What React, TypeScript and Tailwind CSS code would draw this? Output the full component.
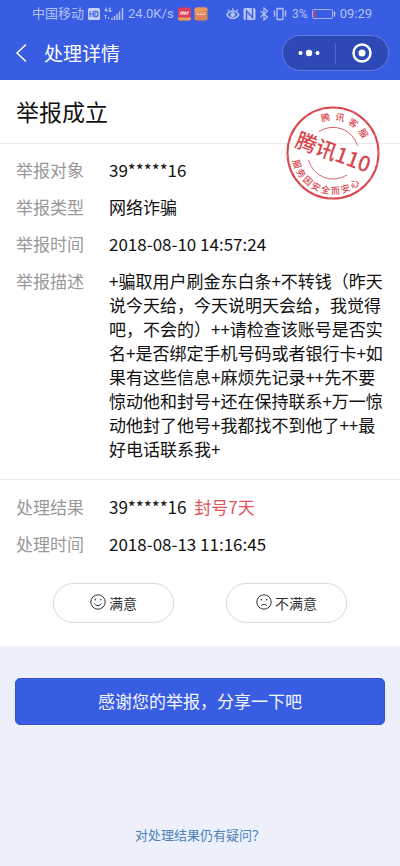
import type { ReactNode } from "react";

const topSeal = ["腾", "讯", "客", "服"];
const bottomSeal = ["服", "务", "因", "安", "全", "而", "安", "心"];

function SignalIcons() {
  return (
    <>
      <svg className="ml-1 h-3 w-3" viewBox="0 0 12 12" aria-hidden="true">
        <rect width="12" height="12" rx="1.5" fill="#c3cff8" />
        <path d="M2 3v6M5.2 3v6M2 6h3.2M7 3.4v5.2h1c1.400 0 2-1 2-2.600s-.6-2.600-2-2.600z" fill="none" stroke="#3a5de0" strokeWidth="1.100" />
      </svg>
      <svg className="ml-1 h-[14px] w-5" viewBox="0 0 20 14" fill="none" stroke="#b4c3f7" aria-hidden="true">
        <path d="M2.500 .5L.8 3.500h2.600M2.700 2v3M7 1.200H5.200v3.300H7V3H6" strokeWidth="1" />
        <path d="M1.500 8v4M.5 9l1-1 1 1M4.500 12v-2" strokeWidth="1" />
        <path d="M8 13v-2M10.500 13V9M13 13V7M15.500 13V4.500M18.500 13V1" strokeWidth="1.500" />
      </svg>
    </>
  );
}

function AppBadges() {
  return (
    <svg className="ml-1 h-[14px] w-[30px]" viewBox="0 0 30 14" aria-hidden="true">
      <rect x="0" y="0.500" width="13" height="13" rx="2" fill="#d8405e" />
      <path d="M0 10.500h13v1a2 2 0 0 1-2 2H2a2 2 0 0 1-2-2z" fill="#e5a25e" />
      <path d="M2 7.500l1.500-3M4.500 7.500l1-3M6.500 7.500l1-3M9 7.500l1.500-3M2.500 5.300h8.500M2 7h8" stroke="#fff" strokeWidth="0.700" />
      <rect x="16.500" y="0.500" width="13" height="13" rx="2" fill="#de8357" />
      <path d="M18.500 .5h9a2 2 0 0 1 2 2v1l-13 2v-3a2 2 0 0 1 2-2z" fill="#e79a5c" />
      <path d="M18.500 7.500h9M18.500 6h2.500M22 6h2M25 6h2.500" stroke="#f5d3bd" strokeWidth="0.900" />
    </svg>
  );
}

function DeviceIcons() {
  return (
    <svg className="h-[14px] w-[62px]" viewBox="0 0 62 14" fill="none" stroke="#b4c3f7" aria-hidden="true">
      <path d="M.8 7.500C3 4.500 5 4 6.800 4s4 .5 6 3.500c-2 3-4 4-6 4s-4-1-6-4z" strokeWidth="1.400" />
      <circle cx="6.800" cy="7.700" r="2" fill="#b4c3f7" />
      <path d="M6.800 3.500V1.200M3.300 4.500L1.800 2.600M10.300 4.500l1.500-1.900" strokeWidth="1.200" />
      <rect x="17.500" y="1" width="12" height="12" rx="1.500" fill="#b4c3f7" stroke="none" />
      <path d="M20.500 13V4l6 6.500V1" stroke="#385de3" strokeWidth="1.300" />
      <path d="M34.500 4l7 6-3.500 3V1l3.500 3-7 6" strokeWidth="1.200" />
      <rect x="51" y="1.500" width="6" height="11" rx="0.500" strokeWidth="1.300" />
      <path d="M49 3.500l-1 1.200 1 1.200-1 1.200 1 1.200-1 1.200M59 3.500l1 1.200-1 1.200 1 1.200-1 1.200 1 1.200" strokeWidth="1.100" />
    </svg>
  );
}

function Seal() {
  return (
    <svg
      className="pointer-events-none absolute top-[25px] right-[19px] h-24 w-24 font-['Noto_Sans_CJK_SC',sans-serif]"
      viewBox="-48 -48 96 96"
      fill="none"
      role="img"
      aria-label="腾讯110"
    >
      <circle r="45.500" stroke="#d9454d" strokeWidth="2" />
      <circle r="45.500" stroke="#fff" strokeWidth="0.700" strokeDasharray="1 9 2 14 1 5" opacity="0.500" />
      <path d="M-14-21.500A25.500 25.500 0 0 1 24.600-7" stroke="#d9656b" strokeWidth="1" />
      <path d="M-24.500 7A25.500 25.500 0 0 0 14 22" stroke="#d9656b" strokeWidth="1" />
      <g fill="#d9454d" textAnchor="middle">
        <text transform="rotate(20)" y="7" fontSize="21" fontWeight="500">
          腾讯110
        </text>
        {topSeal.map((c, i) => (
          <text key={i} transform={`rotate(${-12 + i * 23}) translate(0 -33)`} fontSize="9" fontWeight="500">
            {c}
          </text>
        ))}
        {bottomSeal.map((c, i) => (
          <text key={i} transform={`rotate(${73 - i * 15.4}) translate(0 41)`} fontSize="9" fontWeight="500">
            {c}
          </text>
        ))}
      </g>
    </svg>
  );
}

function Face({ happy }: { happy: boolean }) {
  return (
    <svg className="mb-[3px] h-4 w-4" viewBox="0 0 16 16" fill="none" stroke="#333" strokeWidth="1" aria-hidden="true">
      <circle cx="8" cy="8" r="7.200" />
      <circle cx="5.300" cy="5.800" r="0.800" fill="#333" stroke="none" />
      <circle cx="10.700" cy="5.800" r="0.800" fill="#333" stroke="none" />
      {happy ? <path d="M4.500 9.500c1.700 2.700 5.300 2.700 7 0" /> : <path d="M5 12c1.300-2.200 4.700-2.200 6 0" />}
    </svg>
  );
}

function Row({ label, children }: { label: string; children: ReactNode }) {
  return (
    <div className="flex">
      <dt className="w-[93px] shrink-0 text-[#999]">{label}</dt>
      <dd className="min-w-0 flex-1 text-[#111]">{children}</dd>
    </div>
  );
}

export default function App() {
  return (
    <div className="flex min-h-screen flex-col bg-[#edf0fa] font-['Noto_Sans_CJK_SC',sans-serif]">
      <header className="bg-[#385de3] pb-0.5">
        <div className="flex h-7 items-center pr-7 pl-8 font-[Roboto,'Noto_Sans_CJK_SC',sans-serif] text-[13px] leading-7 text-[#b4c3f7]">
          <span>中国移动</span>
          <SignalIcons />
          <span className="ml-1">24.0K/s</span>
          <AppBadges />
          <div className="ml-auto flex items-center">
            <DeviceIcons />
            <span className="ml-1 text-xs">3%</span>
            <svg className="mx-1 h-3 w-6" viewBox="0 0 24 12" fill="none" aria-hidden="true">
              <rect x="0.500" y="1.500" width="20" height="9" rx="1" stroke="#9fb1f3" />
              <rect x="1.500" y="2.500" width="2" height="7" fill="#c4486f" />
              <path d="M22.500 3.500v5" stroke="#b4c3f7" strokeWidth="1.500" />
            </svg>
            <span>09:29</span>
          </div>
        </div>
        <div className="flex h-[50px] items-center pr-[11px] pl-3 text-white">
          <button type="button" aria-label="返回" className="flex h-8 w-8 items-center">
            <svg className="h-5 w-5" viewBox="0 0 20 20" fill="none" stroke="currentColor" strokeWidth="1.500" aria-hidden="true">
              <path d="M14 1.500L5 10l9 8.500" />
            </svg>
          </button>
          <h1 className="text-[19px] leading-7">处理详情</h1>
          <div className="ml-auto flex h-9 w-[107px] items-center rounded-full border border-[#5f7ce5] bg-[#2e48b5]">
            <button type="button" aria-label="更多" className="flex flex-1 justify-center">
              <svg className="h-2 w-[22px]" viewBox="0 0 22 8" fill="currentColor" aria-hidden="true">
                <circle cx="2.500" cy="4" r="2" />
                <circle cx="11" cy="4" r="3.200" />
                <circle cx="19.500" cy="4" r="2" />
              </svg>
            </button>
            <span className="h-[21px] w-px bg-[#5068c6]" />
            <button type="button" aria-label="关闭" className="flex flex-1 justify-center">
              <svg className="h-5 w-5" viewBox="0 0 20 20" aria-hidden="true">
                <circle cx="10" cy="10" r="8.500" fill="none" stroke="currentColor" strokeWidth="2.500" />
                <circle cx="10" cy="10" r="3.500" fill="currentColor" />
              </svg>
            </button>
          </div>
        </div>
      </header>

      <main className="relative bg-white text-[17px] leading-6">
        <h2 className="border-b border-[#ececec] px-4 pt-[15px] pb-4 text-[23px] leading-8 text-[#111]">举报成立</h2>
        <Seal />
        <dl className="flex flex-col gap-[13px] border-b border-[#ececec] px-4 pt-[14px] pb-[18px]">
          <Row label="举报对象">39*****16</Row>
          <Row label="举报类型">网络诈骗</Row>
          <Row label="举报时间">2018-08-10 14:57:24</Row>
          <Row label="举报描述">
            +骗取用户刷金东白条+不转钱（昨天说今天给，今天说明天会给，我觉得吧，不会的）++请检查该账号是否实名+是否绑定手机号码或者银行卡+如果有这些信息+麻烦先记录++先不要惊动他和封号+还在保持联系+万一惊动他封了他号+我都找不到他了++最好电话联系我+
          </Row>
        </dl>
        <dl className="flex flex-col gap-[13px] px-4 pt-[15px]">
          <Row label="处理结果">
            39*****16 <span className="ml-1 text-[#e0555c]">封号7天</span>
          </Row>
          <Row label="处理时间">2018-08-13 11:16:45</Row>
        </dl>
        <div className="grid grid-cols-2 gap-[52px] px-[53px] pt-[27px] pb-[23px] text-sm text-[#333]">
          <button type="button" className="flex h-10 items-center justify-center gap-[3px] rounded-full border border-[#d9d9d9]">
            <Face happy />
            满意
          </button>
          <button type="button" className="flex h-10 items-center justify-center gap-[3px] rounded-full border border-[#d9d9d9]">
            <Face happy={false} />
            不满意
          </button>
        </div>
      </main>

      <button type="button" className="mx-[15px] mt-8 h-[47px] rounded-[5px] border border-[#3153cd] bg-[#385de3] pb-0.5 text-[17px] text-[#f4f6ff]">
        感谢您的举报，分享一下吧
      </button>
      <a href="#help" className="mx-auto mt-auto mb-[21px] text-[13px] leading-5 text-[#4a7fb8]">
        对处理结果仍有疑问？
      </a>
    </div>
  );
}
